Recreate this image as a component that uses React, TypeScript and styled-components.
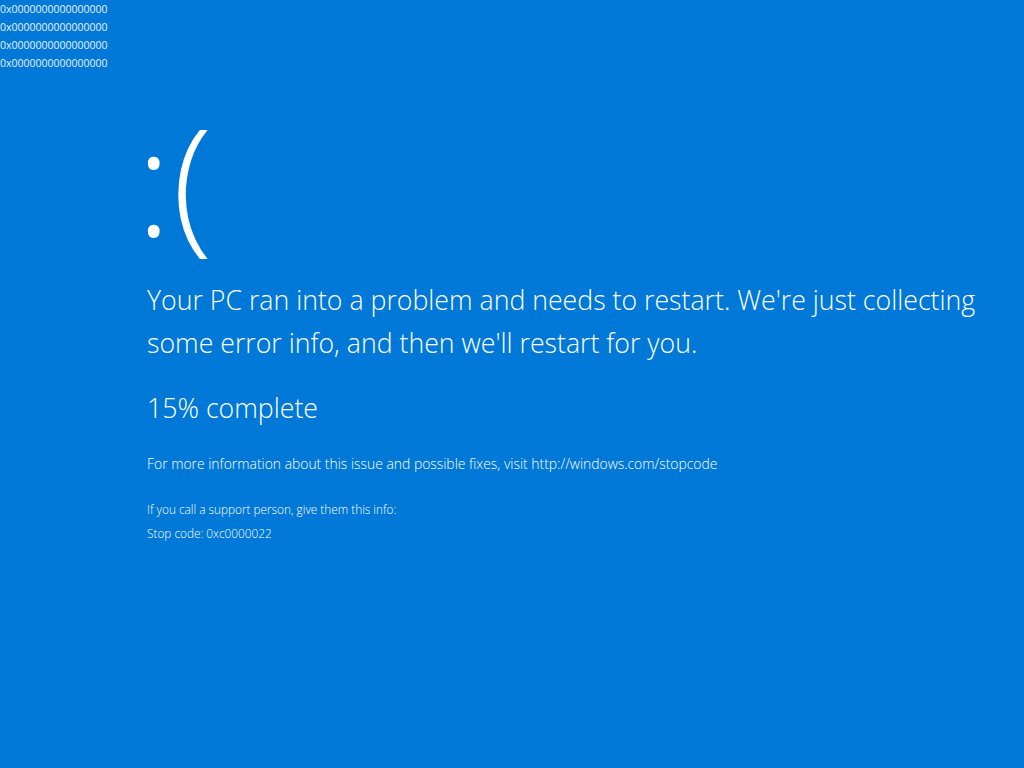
import React from "react";
import styled, { createGlobalStyle } from "styled-components";

const Global = createGlobalStyle`
  html, body { margin: 0; padding: 0; background: #0078d7; }
  body { font-family: "Open Sans", "Noto Sans", sans-serif; color: #ffffff; }
`;

const Screen = styled.div`
  width: 1024px;
  height: 768px;
  background: #0078d7;
  position: relative;
  overflow: hidden;
`;

const HexBlock = styled.div`
  position: absolute;
  left: 0;
  top: 0;
  display: flex;
  flex-direction: column;
  font-size: 10.5px;
  line-height: 18px;
  font-weight: 400;
  color: #e6f1fb;
`;

const Content = styled.div`
  display: flex;
  flex-direction: column;
  padding: 106px 0 0 147px;
  font-weight: 300;
`;

const Face = styled.div`
  font-size: 148px;
  line-height: 145px;
  font-weight: 300;
  margin: 0 0 27px -11px;
  letter-spacing: 1px;
`;

const Message = styled.p<{ $size: number; $lh: number; $mt: number }>`
  margin: ${(p) => p.$mt}px 0 0 0;
  font-size: ${(p) => p.$size}px;
  line-height: ${(p) => p.$lh}px;
  font-weight: 300;
`;

export default function App() {
  const hex = Array.from({ length: 4 }, () => "0x0000000000000000");
  return (
    <>
      <Global />
      <Screen>
        <HexBlock>
          {hex.map((h, i) => (
            <span key={i}>{h}</span>
          ))}
        </HexBlock>
        <Content>
          <Face>:(</Face>
          <Message $size={26.7} $lh={43} $mt={0}>
            Your PC ran into a problem and needs to restart. We're just collecting
            <br />
            some error info, and then we'll restart for you.
          </Message>
          <Message $size={26.7} $lh={43} $mt={22}>
            15% complete
          </Message>
          <Message $size={13.9} $lh={20} $mt={25}>
            For more information about this issue and possible fixes, visit http://windows.com/stopcode
          </Message>
          <Message $size={11.8} $lh={24} $mt={23}>
            If you call a support person, give them this info:
            <br />
            Stop code: 0xc0000022
          </Message>
        </Content>
      </Screen>
    </>
  );
}
